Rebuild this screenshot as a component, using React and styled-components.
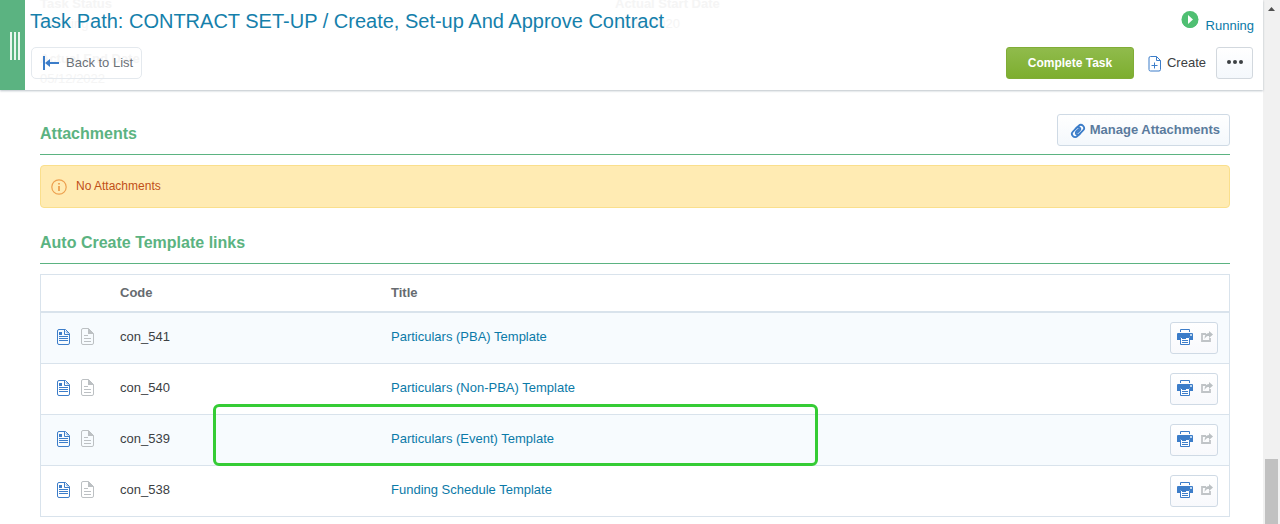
import React from 'react';
import styled, { createGlobalStyle } from 'styled-components';

const GlobalStyle = createGlobalStyle`
  * {
    box-sizing: border-box;
  }

  body {
    margin: 0;
    background: #fff;
    color: #3c4043;
    font-family: "Liberation Sans", Arial, sans-serif;
    font-size: 13px;
    line-height: 16px;
  }

  button {
    font: inherit;
    cursor: pointer;
  }

  a {
    color: #0b7aa8;
    text-decoration: none;
  }

  svg {
    display: block;
    flex: none;
  }
`;

const Page = styled.div`
  display: flex;
  min-height: 100vh;
`;

const Main = styled.main`
  flex: 1;
  min-width: 0;
`;

const Header = styled.header`
  position: relative;
  display: flex;
  height: 90px;
  box-shadow: 0 1px 2px rgba(60, 80, 100, 0.35);
`;

const Handle = styled.div`
  display: flex;
  align-items: center;
  justify-content: center;
  gap: 2px;
  width: 25px;
  padding: 2px 0 0 5px;
  background: #5bb381;
`;

const HandleBar = styled.span`
  width: 2px;
  height: 28px;
  background: #e9f6ef;
`;

const HeaderBody = styled.div`
  position: relative;
  flex: 1;
  display: flex;
  flex-direction: column;
  justify-content: space-between;
  padding: 9px 9px 11px 5px;
`;

const HeaderRow = styled.div`
  display: flex;
  align-items: center;
  justify-content: space-between;
  padding: ${(props) => (props.$inset ? '0 1px' : '0')};
`;

const Title = styled.h1`
  margin: 0;
  color: #1580ab;
  font-size: 20px;
  font-weight: 400;
  line-height: 24px;
`;

const Status = styled.a`
  display: flex;
  align-items: flex-start;
  gap: 7px;
  height: 22px;
`;

const StatusText = styled.span`
  padding-top: 8px;
`;

const Actions = styled.div`
  display: flex;
  align-items: center;
  gap: 10px;
`;

const Button = styled.button`
  display: flex;
  align-items: center;
  justify-content: center;
  height: 32px;
  padding: 0 9px;
  border: 1px solid #cfdae5;
  border-radius: 3px;
  background: linear-gradient(#fff, #f4f8fc);
  color: #3c4043;
`;

const BackButton = styled(Button)`
  gap: 7px;
  padding: 0 8px 0 11px;
  border-color: #e4e9ee;
  border-radius: 5px;
  background: transparent;
  color: #6b7177;
`;

const PrimaryButton = styled(Button)`
  width: 128px;
  border-color: #80ad36;
  background: linear-gradient(#90bb4c, #7dae2f);
  color: #fff;
  font-size: 12px;
  font-weight: 700;
`;

const CreateButton = styled(Button)`
  gap: 5px;
  padding: 0 0 0 4px;
  border: 0;
  background: transparent;
`;

const MoreButton = styled(Button)`
  width: 37px;
  border-color: #d2d8de;
`;

const AttachButton = styled(Button)`
  gap: 4px;
  padding-left: 12px;
  color: #5b7b9d;
  font-weight: 700;
`;

const Faded = styled.dl`
  position: absolute;
  left: ${(props) => props.$left};
  top: ${(props) => props.$top};
  margin: 0;
  color: #f5f5f5;
  line-height: 20px;

  dt {
    font-weight: 700;
  }

  dd {
    margin: 0;
  }
`;

const Content = styled.div`
  padding: 24px 33px 7px 40px;
`;

const SectionHead = styled.div`
  display: flex;
  align-items: center;
  justify-content: space-between;
  height: ${(props) => (props.$tall ? '41px' : '34px')};
  padding-bottom: 8px;
  border-bottom: 1px solid #5bb381;
`;

const SectionTitle = styled.h2`
  margin: 0;
  padding-top: ${(props) => (props.$drop ? '8px' : '0')};
  color: #5bb381;
  font-size: 16px;
  line-height: 20px;
`;

const Alert = styled.div`
  display: flex;
  align-items: center;
  gap: 9px;
  height: 43px;
  margin: 10px 0 22px;
  padding: 0 10px;
  border: 1px solid #fadf8c;
  border-radius: 4px;
  background: #ffebb3;
  color: #bf4f18;
  font-size: 12px;
`;

const AlertText = styled.span`
  padding-bottom: 2px;
`;

const TableWrap = styled.div`
  position: relative;
  margin-top: 10px;
`;

const Table = styled.table`
  width: 100%;
  table-layout: fixed;
  border: 1px solid #d9e3ec;
  border-bottom: 0;
  border-spacing: 0;
`;

const HeadCell = styled.th`
  width: ${(props) => props.$width};
  height: 38px;
  padding: 0 0 1px 9px;
  border-bottom: 2px solid #d9e3ec;
  color: #666b70;
  text-align: left;
`;

const Row = styled.tr`
  background: ${(props) => (props.$striped ? '#f7fbfe' : '#fff')};
`;

const Cell = styled.td`
  height: 51px;
  padding: 0 11px 3px 9px;
  border-bottom: 1px solid #d9e3ec;
`;

const ActionCell = styled(Cell)`
  padding-bottom: 0;
`;

const RowIcons = styled.div`
  display: flex;
  gap: 11px;
  padding: 0 0 1px 7px;
`;

const PrintButton = styled(Button)`
  gap: 8px;
  width: 48px;
  margin-left: auto;
  padding: 0 4px 2px 6px;
  background: linear-gradient(#fff, #f8f9fc);
`;

const Highlight = styled.div`
  position: absolute;
  left: 173px;
  top: 130px;
  width: 605px;
  height: 62px;
  border: 3px solid #35cc35;
  border-radius: 6px;
  pointer-events: none;
`;

const Scrollbar = styled.div`
  display: flex;
  flex-direction: column;
  justify-content: space-between;
  width: 17px;
  padding: 7px 2px 0;
  background: #f1f1f1;
`;

const Thumb = styled.div`
  width: 13px;
  height: 65px;
  background: #c1c1c1;
`;

const BackIcon = () => (
  <svg width="16" height="14" viewBox="0 0 16 14" fill="#3c7dc9">
    <path d="M0 0h2v14H0zM2 7l5-4v3h9v2H7v3z" />
  </svg>
);

const RunningIcon = () => (
  <svg width="18" height="18" viewBox="0 0 18 18">
    <circle cx="9" cy="10" r="8" fill="#4fbf72" />
    <circle cx="9" cy="9.5" r="8.5" fill="#4fbf72" />
    <path d="M7 5v9l5-4.500z" fill="#fff" />
  </svg>
);

const CreateIcon = () => (
  <svg width="14" height="17" viewBox="0 0 14 17" fill="none" stroke="#3c7dc9">
    <path d="M2.500 1.500H8.500l4 4v9a1.500 1.500 0 0 1-1.500 1.500h-8.500a1.500 1.500 0 0 1-1.500-1.500v-11.500a1.500 1.500 0 0 1 1.500-1.500zM8.500 1.500v4h4M6.500 7.500v6M3.500 10.500h6" />
  </svg>
);

const MoreIcon = () => (
  <svg width="16" height="6" viewBox="0 0 16 6" fill="#3c4043">
    <circle cx="2" cy="2" r="2" />
    <circle cx="8" cy="2" r="2" />
    <circle cx="14" cy="2" r="2" />
  </svg>
);

const ClipIcon = () => (
  <svg width="16" height="16" viewBox="0 0 16 16" fill="none" stroke="#3c7dc9" strokeWidth="1.8" strokeLinecap="round">
    <g transform="rotate(-45 8 9)">
      <path d="M8 12.200H4a3.200 3.200 0 0 1 0-6.400h5.500a2 2 0 0 1 0 4H6" />
      <path d="M8 5.800h4a3.200 3.200 0 0 1 0 6.400H6.500a2 2 0 0 1 0-4H10" />
    </g>
  </svg>
);

const InfoIcon = () => (
  <svg width="16" height="16" viewBox="0 0 16 16" fill="none" stroke="#eda04f">
    <circle cx="8" cy="8" r="7.200" strokeWidth="1.200" />
    <path d="M8 7v5M8 4v1.500" strokeWidth="1.800" />
  </svg>
);

const DetailsIcon = () => (
  <svg width="13" height="17" viewBox="0 0 13 17" fill="none" stroke="#3c7dc9">
    <path d="M2 1.500h6.500l4 4V15a1.500 1.500 0 0 1-1.500 1.500H2A1.500 1.500 0 0 1 .5 15V3A1.500 1.500 0 0 1 2 1.500zM7.500 2v4.500H12M9 3.500L11 5.500" />
    <path d="M2 8.500h9M2 10.500h9M2 12.500h9" />
    <path d="M2 4h3v3H2z" fill="#3c7dc9" stroke="none" />
  </svg>
);

const PageIcon = () => (
  <svg width="13" height="17" viewBox="0 0 13 17" fill="none" stroke="#bcc0c3">
    <path d="M2 .5h5.500l5 5V15a1.500 1.500 0 0 1-1.500 1.500H2A1.500 1.500 0 0 1 .5 15V2A1.500 1.500 0 0 1 2 .5z" />
    <path d="M3 7.500h4M3 10.500h7M3 13.500h7" />
    <path d="M7 0l6 6H7z" fill="#bcc0c3" stroke="none" />
  </svg>
);

const PrintIcon = () => (
  <svg width="16" height="16" viewBox="0 0 16 16">
    <path d="M3.500 3V.5h9V3" fill="none" stroke="#3c7dc9" />
    <path d="M1 4h14a1 1 0 0 1 1 1v6h-3V8H3v3H0V5a1 1 0 0 1 1-1z" fill="#3c7dc9" />
    <path d="M3.500 8.500h9v7h-9z" fill="#fff" stroke="#3c7dc9" />
    <path d="M5 9.500h4M5 11.500h6M5 13.500h6" stroke="#3c7dc9" />
    <path d="M13 5h2v2h-2z" fill="#b9d3ee" />
  </svg>
);

const ShareIcon = () => (
  <svg width="12" height="12" viewBox="0 0 12 12">
    <path d="M5 3H1v7h8V7" fill="none" stroke="#c0c4c7" strokeWidth="1.800" />
    <path d="M8 0l4 3.500L8 7V5C6 5 5 5.500 3.500 8 3.500 4 5 2 8 2z" fill="#bbc0c3" />
  </svg>
);

const ArrowUp = () => (
  <svg width="13" height="4" viewBox="0 0 13 4">
    <path d="M3 4l3.500-4L10 4z" fill="#505050" />
  </svg>
);

const templates = [
  { code: 'con_541', title: 'Particulars (PBA) Template' },
  { code: 'con_540', title: 'Particulars (Non-PBA) Template' },
  { code: 'con_539', title: 'Particulars (Event) Template' },
  { code: 'con_538', title: 'Funding Schedule Template' },
];

const App = () => {
  return (
    <Page>
      <GlobalStyle />
      <Main>
        <Header>
          <Faded $left="40px" $top="-6px">
            <dt>Task Status</dt>
            <dd>Running</dd>
          </Faded>
          <Faded $left="615px" $top="-6px">
            <dt>Actual Start Date</dt>
            <dd>10/10/2020</dd>
          </Faded>
          <Faded $left="40px" $top="49px">
            <dt>Actual End Date</dt>
            <dd>05/12/2022</dd>
          </Faded>
          <Handle>
            <HandleBar />
            <HandleBar />
            <HandleBar />
          </Handle>
          <HeaderBody>
            <HeaderRow>
              <Title>Task Path: CONTRACT SET-UP / Create, Set-up And Approve Contract</Title>
              <Status href="#status">
                <RunningIcon />
                <StatusText>Running</StatusText>
              </Status>
            </HeaderRow>
            <HeaderRow $inset>
              <BackButton type="button">
                <BackIcon />
                Back to List
              </BackButton>
              <Actions>
                <PrimaryButton type="button">Complete Task</PrimaryButton>
                <CreateButton type="button">
                  <CreateIcon />
                  Create
                </CreateButton>
                <MoreButton type="button" aria-label="More actions">
                  <MoreIcon />
                </MoreButton>
              </Actions>
            </HeaderRow>
          </HeaderBody>
        </Header>

        <Content>
          <SectionHead $tall>
            <SectionTitle $drop>Attachments</SectionTitle>
            <AttachButton type="button">
              <ClipIcon />
              Manage Attachments
            </AttachButton>
          </SectionHead>
          <Alert>
            <InfoIcon />
            <AlertText>No Attachments</AlertText>
          </Alert>

          <SectionHead>
            <SectionTitle>Auto Create Template links</SectionTitle>
          </SectionHead>
          <TableWrap>
            <Table>
              <thead>
                <tr>
                  <HeadCell $width="70px" />
                  <HeadCell $width="271px">Code</HeadCell>
                  <HeadCell>Title</HeadCell>
                  <HeadCell $width="80px" />
                </tr>
              </thead>
              <tbody>
                {templates.map((item, i) => (
                  <Row key={item.code} $striped={i % 2 === 0}>
                    <Cell>
                      <RowIcons>
                        <DetailsIcon />
                        <PageIcon />
                      </RowIcons>
                    </Cell>
                    <Cell>{item.code}</Cell>
                    <Cell>
                      <a href={`#${item.code}`}>{item.title}</a>
                    </Cell>
                    <ActionCell>
                      <PrintButton type="button" aria-label={`Print ${item.title}`}>
                        <PrintIcon />
                        <ShareIcon />
                      </PrintButton>
                    </ActionCell>
                  </Row>
                ))}
              </tbody>
            </Table>
            <Highlight />
          </TableWrap>
        </Content>
      </Main>
      <Scrollbar>
        <ArrowUp />
        <Thumb />
      </Scrollbar>
    </Page>
  );
};

export default App;
